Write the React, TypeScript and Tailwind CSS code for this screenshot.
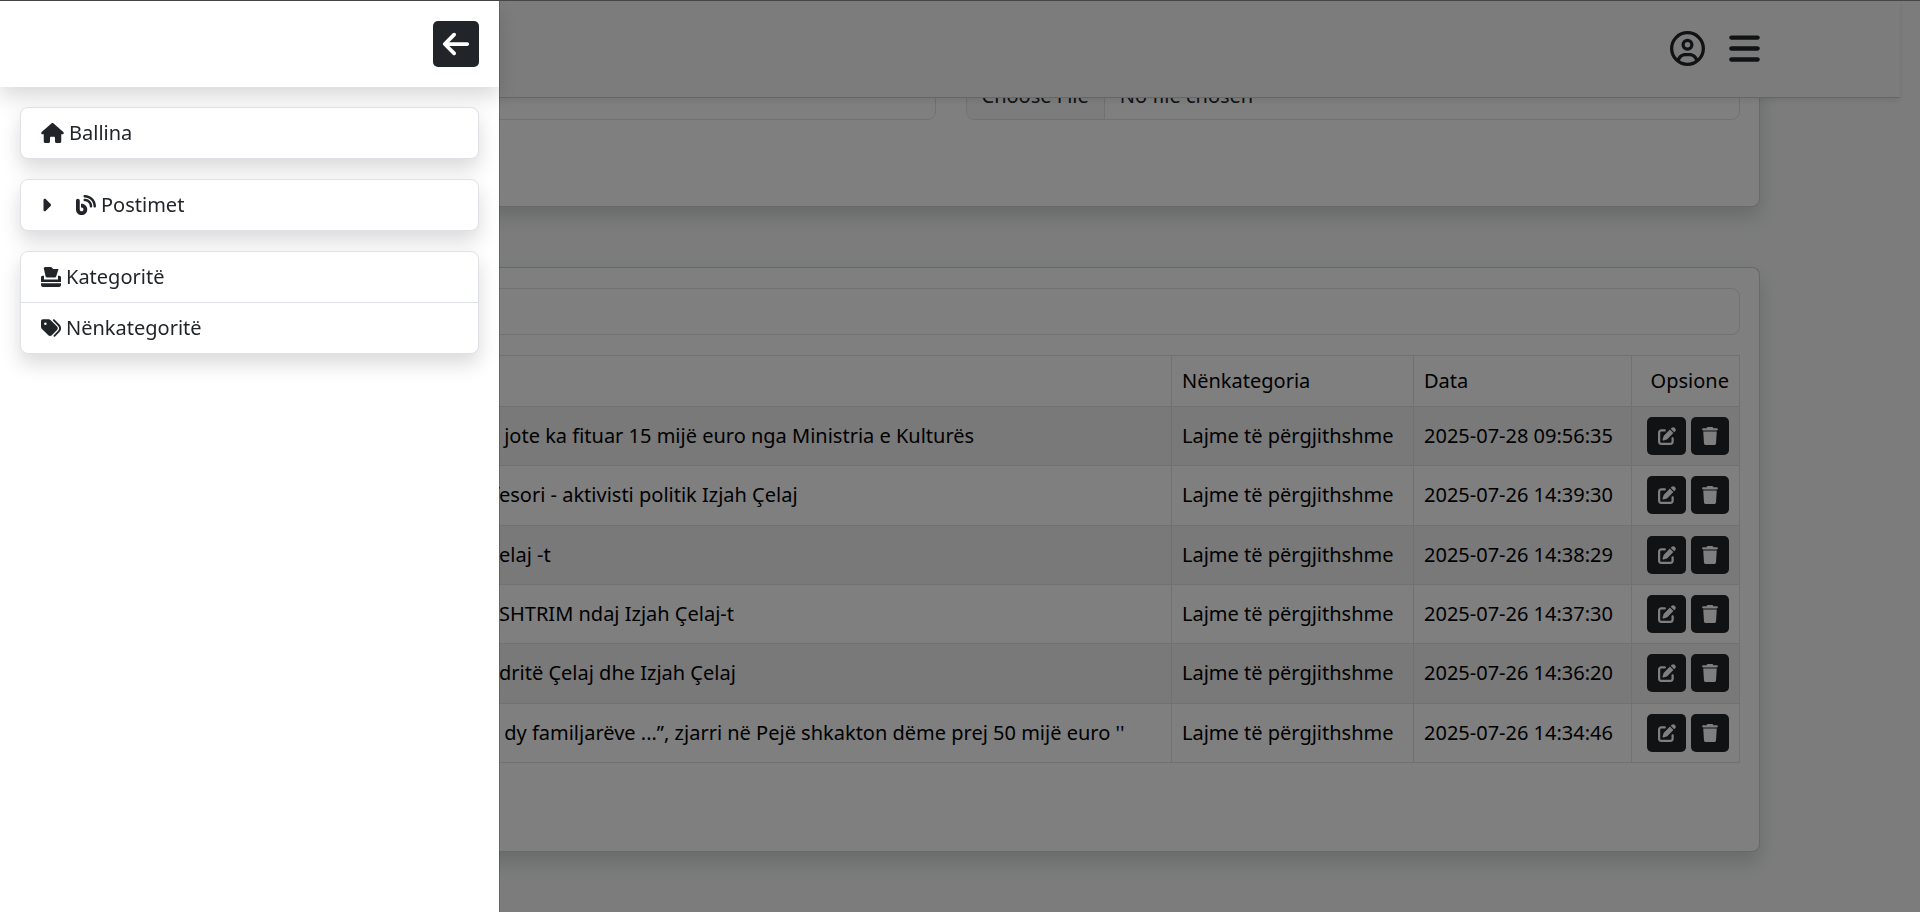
import {
  FaArrowLeft,
  FaBars,
  FaBlog,
  FaCaretRight,
  FaHouse,
  FaPenToSquare,
  FaRegCircleUser,
  FaTags,
  FaTrash,
} from 'react-icons/fa6';

interface Post {
  lead: string;
  title: string;
  subcategory: string;
  date: string;
}

const POSTS: Post[] = [
  {
    lead: 'Kënga',
    title: ' jote ka fituar 15 mijë euro nga Ministria e Kulturës',
    subcategory: 'Lajme të përgjithshme',
    date: '2025-07-28 09:56:35',
  },
  {
    lead: 'Prof',
    title: 'esori - aktivisti politik Izjah Çelaj',
    subcategory: 'Lajme të përgjithshme',
    date: '2025-07-26 14:39:30',
  },
  {
    lead: 'Izjah Ç',
    title: 'elaj -t',
    subcategory: 'Lajme të përgjithshme',
    date: '2025-07-26 14:38:29',
  },
  {
    lead: 'NGU',
    title: 'SHTRIM ndaj Izjah Çelaj-t',
    subcategory: 'Lajme të përgjithshme',
    date: '2025-07-26 14:37:30',
  },
  {
    lead: 'Ba',
    title: 'dritë Çelaj dhe Izjah Çelaj',
    subcategory: 'Lajme të përgjithshme',
    date: '2025-07-26 14:36:20',
  },
  {
    lead: 'e',
    title: " dy familjarëve ...”, zjarri në Pejë shkakton dëme prej 50 mijë euro ''",
    subcategory: 'Lajme të përgjithshme',
    date: '2025-07-26 14:34:46',
  },
];

const CARD = 'rounded-lg border border-black/18 bg-white shadow-[0_10px_20px_rgba(0,0,0,0.15)]';
const LIST = 'rounded-lg border border-[#dee2e6] bg-white shadow-[0_10px_20px_rgba(0,0,0,0.15)]';
const CELL = 'border border-[#dee2e6] p-[10px] font-normal';

function BallotIcon(): JSX.Element {
  return (
    <svg viewBox="0 0 20 20" className="size-5" fill="currentColor">
      <path d="M2.700 1 4 0h6.200l2 2h5.300L15.200 9.500a1.500 1.500 0 0 1-1.400 1H6a1.500 1.500 0 0 1-1.400-1z" />
      <path d="M0 10.300a1.500 1.500 0 0 1 1.500-1.500H3v3.700h14V8.800h1.500a1.500 1.500 0 0 1 1.500 1.500V15H0z" />
      <path d="M0 16.300h20V18a2 2 0 0 1-2 2H2a2 2 0 0 1-2-2z" />
    </svg>
  );
}

function Sidebar(): JSX.Element {
  return (
    <aside className="fixed inset-y-0 left-0 z-30 w-[500px] border-r border-black/18 bg-white bg-clip-padding pt-px">
      <div className="flex justify-end p-5 shadow-[0_10px_20px_rgba(0,0,0,0.15)]">
        <button
          type="button"
          aria-label="Mbyll"
          className="flex size-[46px] items-center justify-center rounded-[5px] bg-[#212529] text-white"
        >
          <FaArrowLeft className="size-[30px]" />
        </button>
      </div>
      <nav className="flex flex-col gap-5 p-5">
        <div className={LIST}>
          <a href="#ballina" className="flex items-center gap-[5px] px-5 py-[10px]">
            <FaHouse className="h-5 w-[23px]" />
            Ballina
          </a>
        </div>
        <div className={LIST}>
          <button type="button" className="flex w-full items-center px-5 py-[10px] text-left">
            <FaCaretRight className="mr-[25px] h-5 w-[10px]" />
            <FaBlog className="mr-[5px] size-5" />
            Postimet
          </button>
        </div>
        <div className={LIST}>
          <a href="#kategorite" className="flex items-center gap-[5px] px-5 py-[10px]">
            <BallotIcon />
            Kategoritë
          </a>
          <a
            href="#nenkategorite"
            className="flex items-center gap-[5px] border-t border-[#dee2e6] px-5 py-[10px]"
          >
            <FaTags className="size-5" />
            Nënkategoritë
          </a>
        </div>
      </nav>
    </aside>
  );
}

export default function App(): JSX.Element {
  return (
    <div className="relative h-screen overflow-hidden bg-[#f8f9fa] font-['Noto_Sans',sans-serif] text-xl leading-[30px] text-[#212529]">
      <header className="absolute inset-x-0 top-0 z-10 mr-5 border-b border-black/18 bg-[#f8f9fa] py-[30px] shadow-[0_3px_6px_rgba(0,0,0,0.08)]">
        <div className="mx-auto flex h-[37px] max-w-[1620px] items-center justify-end gap-6">
          <button type="button" aria-label="Profili">
            <FaRegCircleUser className="size-[35px]" />
          </button>
          <button type="button" aria-label="Menu">
            <FaBars className="h-[35px] w-[31px]" />
          </button>
        </div>
      </header>

      <main className="mr-5 pt-[51px]">
        <div className="mx-auto flex max-w-[1620px] flex-col gap-[60px]">
          <section className={`${CARD} pt-5 pr-[19px] pb-[86px] pl-5`}>
            <div className="grid grid-cols-2 gap-[30px]">
              <input
                type="text"
                aria-label="Titulli"
                className="h-12 rounded-lg border border-[#dee2e6] px-[15px]"
              />
              <input
                type="file"
                aria-label="Foto"
                className="h-12 overflow-hidden rounded-lg border border-[#dee2e6] leading-[46px] file:mr-[15px] file:h-[46px] file:border-r file:border-[#dee2e6] file:bg-[#f8f9fa] file:px-[15px]"
              />
            </div>
          </section>

          <section className={`${CARD} pt-5 pr-[19px] pb-[88px] pl-5`}>
            <input
              type="search"
              aria-label="Kërko"
              className="mb-5 block h-[47px] w-full rounded-lg border border-[#dee2e6] px-[15px]"
            />
            <table className="h-[408px] w-full border-collapse text-left text-black">
              <thead>
                <tr>
                  <th className={CELL}>Titulli</th>
                  <th className={`${CELL} w-[242px]`}>Nënkategoria</th>
                  <th className={`${CELL} w-[218px]`}>Data</th>
                  <th className={`${CELL} w-[108px] text-right`}>Opsione</th>
                </tr>
              </thead>
              <tbody>
                {POSTS.map((post) => (
                  <tr key={post.date} className="odd:bg-[#f2f2f2]">
                    <td className={`${CELL} whitespace-pre`}>
                      <span className="inline-block w-[327px] text-right">{post.lead}</span>
                      {post.title}
                    </td>
                    <td className={CELL}>{post.subcategory}</td>
                    <td className={CELL}>{post.date}</td>
                    <td className={CELL}>
                      <div className="flex justify-end gap-[5px] text-white">
                        <button
                          type="button"
                          aria-label="Ndrysho"
                          className="flex h-[38px] w-[39px] items-center justify-center rounded-[5px] bg-[#212529]"
                        >
                          <FaPenToSquare className="size-[18px]" />
                        </button>
                        <button
                          type="button"
                          aria-label="Fshij"
                          className="flex h-[38px] w-[38px] items-center justify-center rounded-[5px] bg-[#212529]"
                        >
                          <FaTrash className="size-[18px]" />
                        </button>
                      </div>
                    </td>
                  </tr>
                ))}
              </tbody>
            </table>
          </section>
        </div>
      </main>

      <div className="fixed inset-0 z-20 bg-black/50" />
      <Sidebar />
      <div className="fixed inset-x-0 top-0 z-40 h-px bg-[#454545]" />
    </div>
  );
}
